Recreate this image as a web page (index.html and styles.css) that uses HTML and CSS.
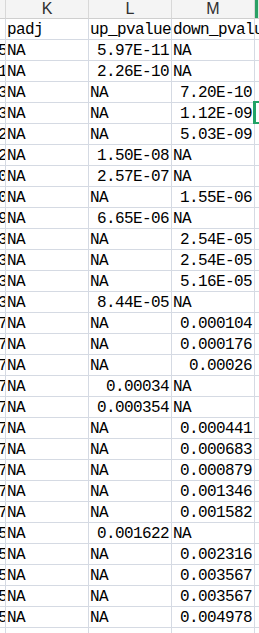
FILE: index.html
```html
<!DOCTYPE html>
<html>
<head>
<meta charset="utf-8">
<link rel="stylesheet" href="styles.css">
</head>
<body>
<div class="sheet">
  <div class="hd"></div><div class="hd">K</div><div class="hd">L</div><div class="hd">M</div><div class="hd sel-col"></div>

  <div class="c j"></div><div class="c">padj</div><div class="c">up_pvalue</div><div class="c">down_pvalue</div><div class="c n"></div>

  <div class="c j">5</div><div class="c">NA</div><div class="c r">5.97E-11</div><div class="c">NA</div><div class="c n"></div>
  <div class="c j">1</div><div class="c">NA</div><div class="c r">2.26E-10</div><div class="c">NA</div><div class="c n"></div>
  <div class="c j">3</div><div class="c">NA</div><div class="c">NA</div><div class="c r">7.20E-10</div><div class="c n"></div>
  <div class="c j">3</div><div class="c">NA</div><div class="c">NA</div><div class="c r">1.12E-09</div><div class="c n"></div>
  <div class="c j">2</div><div class="c">NA</div><div class="c">NA</div><div class="c r">5.03E-09</div><div class="c n"></div>
  <div class="c j">2</div><div class="c">NA</div><div class="c r">1.50E-08</div><div class="c">NA</div><div class="c n"></div>
  <div class="c j">0</div><div class="c">NA</div><div class="c r">2.57E-07</div><div class="c">NA</div><div class="c n"></div>
  <div class="c j">0</div><div class="c">NA</div><div class="c">NA</div><div class="c r">1.55E-06</div><div class="c n"></div>
  <div class="c j">9</div><div class="c">NA</div><div class="c r">6.65E-06</div><div class="c">NA</div><div class="c n"></div>
  <div class="c j">3</div><div class="c">NA</div><div class="c">NA</div><div class="c r">2.54E-05</div><div class="c n"></div>
  <div class="c j">3</div><div class="c">NA</div><div class="c">NA</div><div class="c r">2.54E-05</div><div class="c n"></div>
  <div class="c j">3</div><div class="c">NA</div><div class="c">NA</div><div class="c r">5.16E-05</div><div class="c n"></div>
  <div class="c j">3</div><div class="c">NA</div><div class="c r">8.44E-05</div><div class="c">NA</div><div class="c n"></div>
  <div class="c j">7</div><div class="c">NA</div><div class="c">NA</div><div class="c r">0.000104</div><div class="c n"></div>
  <div class="c j">7</div><div class="c">NA</div><div class="c">NA</div><div class="c r">0.000176</div><div class="c n"></div>
  <div class="c j">7</div><div class="c">NA</div><div class="c">NA</div><div class="c r">0.00026</div><div class="c n"></div>
  <div class="c j">7</div><div class="c">NA</div><div class="c r">0.00034</div><div class="c">NA</div><div class="c n"></div>
  <div class="c j">7</div><div class="c">NA</div><div class="c r">0.000354</div><div class="c">NA</div><div class="c n"></div>
  <div class="c j">7</div><div class="c">NA</div><div class="c">NA</div><div class="c r">0.000441</div><div class="c n"></div>
  <div class="c j">7</div><div class="c">NA</div><div class="c">NA</div><div class="c r">0.000683</div><div class="c n"></div>
  <div class="c j">7</div><div class="c">NA</div><div class="c">NA</div><div class="c r">0.000879</div><div class="c n"></div>
  <div class="c j">7</div><div class="c">NA</div><div class="c">NA</div><div class="c r">0.001346</div><div class="c n"></div>
  <div class="c j">7</div><div class="c">NA</div><div class="c">NA</div><div class="c r">0.001582</div><div class="c n"></div>
  <div class="c j">5</div><div class="c">NA</div><div class="c r">0.001622</div><div class="c">NA</div><div class="c n"></div>
  <div class="c j">5</div><div class="c">NA</div><div class="c">NA</div><div class="c r">0.002316</div><div class="c n"></div>
  <div class="c j">5</div><div class="c">NA</div><div class="c">NA</div><div class="c r">0.003567</div><div class="c n"></div>
  <div class="c j">5</div><div class="c">NA</div><div class="c">NA</div><div class="c r">0.003567</div><div class="c n"></div>
  <div class="c j">5</div><div class="c">NA</div><div class="c">NA</div><div class="c r">0.004978</div><div class="c n"></div>

  <div class="c j"></div><div class="c"></div><div class="c"></div><div class="c"></div><div class="c n"></div>
  <div class="selection"></div>
</div>
</body>
</html>
```
FILE: styles.css
```css
html, body {
  margin: 0;
  padding: 0;
  overflow: hidden;
  background: #ffffff;
}

.sheet {
  position: relative;
  display: grid;
  grid-template-columns: 6px 83px 83px 83px 1fr;
  grid-template-rows: 19px;
  grid-auto-rows: 21px;
  width: 259px;
}

.hd {
  box-sizing: border-box;
  background: #f4f4f4;
  border-right: 1px solid #d8d8d8;
  border-bottom: 1px solid #cfcfcf;
  font-family: "Liberation Sans", "Noto Sans", sans-serif;
  font-size: 16px;
  line-height: 18px;
  color: #2f2f2f;
  text-align: center;
}

.hd.sel-col {
  background: #dfeee5;
  border-right: none;
  box-shadow: inset 3px 0 0 #2aa065;
}

.c {
  box-sizing: border-box;
  border-right: 1px solid #d5dae3;
  border-bottom: 1px solid #d5dae3;
  font-family: "Liberation Mono", "DejaVu Sans Mono", monospace;
  font-size: 16px;
  letter-spacing: -0.6px;
  line-height: 20px;
  color: #000000;
  padding: 1px 1px 0 1px;
  white-space: nowrap;
}

.c.r {
  text-align: right;
  padding-right: 2px;
}

.c.j {
  direction: rtl;
  text-indent: -2px;
  overflow: hidden;
  padding: 1px 0 0 0;
}

.c.n {
  border-right: none;
}

.selection {
  position: absolute;
  left: 253px;
  top: 101px;
  width: 12px;
  height: 23px;
  box-sizing: border-box;
  border: 2px solid #21a366;
  border-left-width: 3px;
}
```
